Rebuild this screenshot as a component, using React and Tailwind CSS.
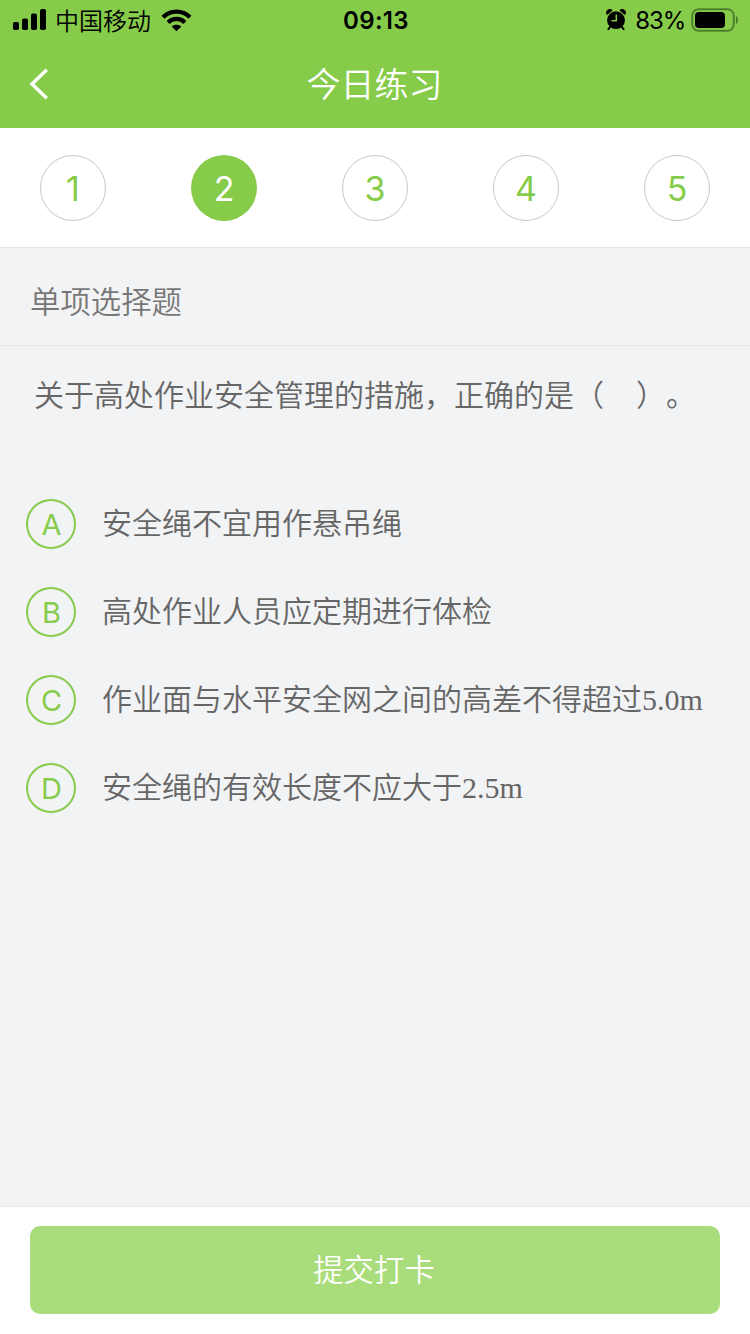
import React, { useState } from 'react';

const questions = [1, 2, 3, 4, 5];

const options = [
  { key: 'A', text: '安全绳不宜用作悬吊绳' },
  { key: 'B', text: '高处作业人员应定期进行体检' },
  { key: 'C', text: '作业面与水平安全网之间的高差不得超过', value: '5.0m' },
  { key: 'D', text: '安全绳的有效长度不应大于', value: '2.5m' },
];

const StatusBar = () => (
  <div className="h-10 grid grid-cols-3 items-center pl-[13px] pr-[11px] text-black">
    <div className="flex items-center">
      <svg width="34" height="22" viewBox="0 0 34 22" fill="currentColor">
        <rect x="0" y="13" width="6" height="8" rx="1.8" />
        <rect x="9" y="9.5" width="6" height="11.5" rx="1.8" />
        <rect x="18" y="4.5" width="6" height="16.5" rx="1.8" />
        <rect x="27" y="0" width="6" height="21" rx="1.8" />
      </svg>
      <span className="ml-2 pt-[3px] text-[24px] leading-[37px] font-[350]">中国移动</span>
      <svg className="ml-2.5" width="31" height="23" viewBox="0 0 31 23" fill="none" stroke="currentColor" strokeWidth="4.2">
        <path d="M2 8.2C9.6 0.7 21.4 0.7 29 8.2" />
        <path d="M7.1 13.4C11.9 8.8 19.1 8.8 23.9 13.4" />
        <path d="M15.5 22.3L10.7 17.6C13.4 15.1 17.6 15.1 20.3 17.6Z" fill="currentColor" stroke="none" />
      </svg>
    </div>
    <div className="pt-[2px] text-center text-[24px] leading-[38px] font-semibold tracking-[0.3px]">09:13</div>
    <div className="flex items-center justify-end">
      <svg width="20" height="22" viewBox="0 0 20 22">
        <path d="M4.5 17.5L2.4 20.2M15.5 17.5L17.6 20.2" stroke="currentColor" strokeWidth="2" strokeLinecap="round" />
        <path d="M1 6A3.4 3.4 0 0 1 6.6 1.4ZM19 6A3.4 3.4 0 0 0 13.4 1.4Z" fill="currentColor" />
        <circle cx="10" cy="11.2" r="8.9" fill="currentColor" />
        <path d="M10.3 5.5V11.8H5.5" fill="none" stroke="#86cc4a" strokeWidth="1.5" />
      </svg>
      <span className="ml-[9px] pt-[2px] text-[24px] leading-[38px] tracking-[-1.2px]">83%</span>
      <svg className="ml-[5px]" width="49" height="24" viewBox="0 0 49 24">
        <rect x="2.2" y="1.2" width="41.6" height="21.6" rx="6.5" fill="none" stroke="#4c812e" strokeWidth="2" />
        <rect x="5" y="4" width="30" height="16" rx="3.8" fill="currentColor" />
        <path d="M46 8C48.7 9 48.7 15 46 16Z" fill="#4c812e" />
      </svg>
    </div>
  </div>
);

const App = () => {
  const [current, setCurrent] = useState(2);

  return (
    <div className="h-[1334px] w-[750px] flex flex-col overflow-hidden bg-[#f2f3f5] font-[Inter,'Noto_Sans_CJK_SC',sans-serif] text-[#666]">
      <header className="h-32 shrink-0 bg-[#86cc4a]">
        <StatusBar />
        <div className="h-22 grid grid-cols-[1fr_auto_1fr] items-center text-white">
          <button className="ml-7">
            <svg width="22" height="32" viewBox="0 0 22 32" fill="none" stroke="currentColor" strokeWidth="3.4">
              <path d="M18.8 1.8L4 16L18.8 30.2" />
            </svg>
          </button>
          <h1 className="pt-px pr-px text-[34px] font-[350] leading-[50px]">今日练习</h1>
        </div>
      </header>

      <nav className="h-[120px] shrink-0 px-10 pt-[27px] flex items-start justify-between bg-white border-b border-[#e5e5e5]">
        {questions.map((n) => (
          <button
            key={n}
            onClick={() => setCurrent(n)}
            className={
              n === current
                ? 'size-[66px] rounded-full text-[34px] bg-[#86cc4a] text-white'
                : 'size-[66px] rounded-full text-[34px] border border-[#c8c8c8] text-[#86cc4a]'
            }
          >
            {n}
          </button>
        ))}
      </nav>

      <div className="h-[98px] shrink-0 px-[30px] pt-8 text-[30.4px] leading-[44px] font-[350] text-[#777] border-b border-[#e6e8ea]">
        单项选择题
      </div>

      <main className="flex-1">
        <p className="pl-[34px] pt-[27px] text-[30px] leading-[44px] font-[350] whitespace-pre [text-spacing-trim:space-all]">
          关于高处作业安全管理的措施，正确的是（<span className="tracking-[2px]">　</span>）。
        </p>
        <ul className="mt-[82px] pl-[26px] flex flex-col gap-[38px]">
          {options.map((o) => (
            <li key={o.key} className="h-[50px] flex items-center">
              <span className="size-[50px] pl-px pt-px rounded-full border-2 border-[#86cc4a] flex items-center justify-center text-[29px] text-[#86cc4a]">
                {o.key}
              </span>
              <span className="ml-[26px] pb-[3px] text-[30px] leading-[44px] font-[350]">
                {o.text}
                {o.value && <span className="font-['Liberation_Serif',serif] leading-none">{o.value}</span>}
              </span>
            </li>
          ))}
        </ul>
      </main>

      <footer className="h-32 shrink-0 px-[30px] pt-[19px] bg-white border-t border-[#e6e6e6]">
        <button className="w-full h-22 pt-[2px] pr-[2px] rounded-[10px] bg-[#a9dc7a] text-white text-[30.4px] font-[350]">提交打卡</button>
      </footer>
    </div>
  );
};

export default App;
